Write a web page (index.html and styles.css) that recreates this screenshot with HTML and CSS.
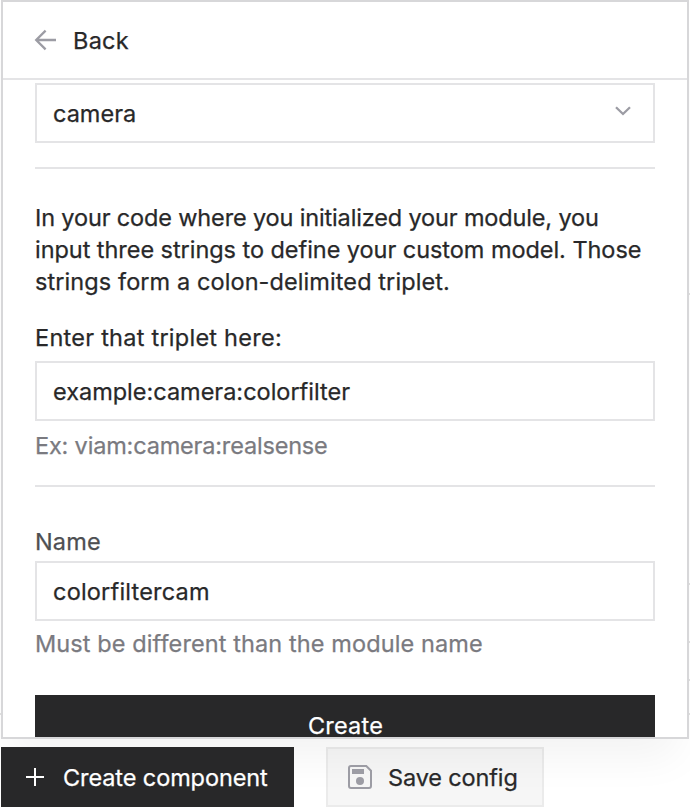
FILE: index.html
```html
<!DOCTYPE html>
<html lang="en">
<head>
<meta charset="utf-8">
<title>Create component</title>
<link rel="stylesheet" href="styles.css">
</head>
<body>
<div class="backdrop"></div>
<main class="panel">
  <header class="panel-header">
    <svg class="arrow" width="24" height="24" viewBox="0 0 24 24"><path d="M23 12H3.2M12.6 2.6 3.2 12l9.4 9.4"/></svg>
    <span class="back">Back</span>
  </header>
  <div class="panel-body">
    <div class="field select">
      <span class="camera">camera</span>
      <svg class="chevron" width="18" height="12" viewBox="0 0 18 12"><path d="m2 2.2 7 6.8 7-6.8"/></svg>
    </div>
    <hr class="rule">
    <p class="intro">
      <span class="line-one">In your code where you initialized your module, you</span>
      <span class="line-two">input three strings to define your custom model. Those</span>
      <span class="line-three">strings form a colon-delimited triplet.</span>
    </p>
    <div class="label enter">Enter that triplet here:</div>
    <div class="field"><span class="triplet">example:camera:colorfilter</span></div>
    <div class="hint example">Ex: viam:camera:realsense</div>
    <hr class="rule second">
    <div class="label name">Name</div>
    <div class="field"><span class="name-value">colorfiltercam</span></div>
    <div class="hint different">Must be different than the module name</div>
    <div class="submit">Create</div>
  </div>
</main>
<footer class="actions">
  <div class="button primary">
    <svg class="plus" width="20" height="20" viewBox="0 0 20 20"><path d="M10 1v18M1 10h18"/></svg>
    <span class="create-component">Create component</span>
  </div>
  <div class="button secondary">
    <svg class="save" width="24" height="24" viewBox="0 0 24 24"><path class="outline" d="M3 1h15.3L23 5.7V21a2 2 0 0 1-2 2H3a2 2 0 0 1-2-2V3a2 2 0 0 1 2-2Z"/><path d="M4 4h12v5H4z"/><circle cx="12" cy="16" r="4"/></svg>
    <span class="save-config">Save config</span>
  </div>
</footer>
</body>
</html>
```

FILE: styles.css
```css
* { box-sizing: border-box; }

body {
  margin: 0;
  height: 812px;
  overflow: hidden;
  background: #fff;
  color: #282829;
  font: 400 23.5px/32px Inter, "Liberation Sans", sans-serif;
  -webkit-text-stroke: .25px currentColor;
  white-space: nowrap;
}

svg { display: block; flex: none; fill: none; }

/* Table rules that continue behind the panel */
.backdrop {
  position: absolute;
  inset: 0 0 auto;
  height: 739px;
  z-index: -1;
  background:
    linear-gradient(#e0e0e0, #e0e0e0) 100% 293px / 2px 2px no-repeat,
    linear-gradient(#e0e0e0, #e0e0e0) 100% 583px / 2px 2px no-repeat,
    linear-gradient(#e0e0e0, #e0e0e0) 100% 641px / 2px 2px no-repeat,
    linear-gradient(#e0e0e0, #e0e0e0) 100% 679px / 2px 2px no-repeat,
    linear-gradient(#e0e0e0, #e0e0e0) 0 713px / 100% 2px no-repeat;
}

.panel {
  width: 688px;
  height: 739px;
  margin-left: 1px;
  border: 2px solid #d7d7d9;
  background: #fff;
  overflow: hidden;
  box-shadow: 0 30px 40px -12px rgb(0 0 0 / .05);
}

.panel-header {
  display: flex;
  align-items: center;
  gap: 15px;
  height: 78px;
  padding: 1px 30px 0;
  border-bottom: 2px solid #e4e4e6;
}

.arrow { stroke: #9c9ca4; stroke-width: 2.3; margin: -2px 1px 0 0; }
.back { letter-spacing: .25px; }

.panel-body { padding: 3px 32px 0; }

.field {
  display: flex;
  align-items: center;
  justify-content: space-between;
  height: 60px;
  padding: 2px 21px 0 16px;
  border: 2px solid #e4e4e6;
}

.select { padding-top: 1px; }
.chevron { stroke: #9c9ca4; stroke-width: 2.3; margin-top: -5px; }
.camera { letter-spacing: 0; }

.rule { height: 2px; margin: 24px 0 33px; border: 0; background: #e4e4e6; }
.second { margin: 23px 0 39px; }

.intro { margin: 0 0 24px; }
.intro span { display: block; }
.line-one { letter-spacing: -.15px; }
.line-two { letter-spacing: -.05px; }
.line-three { letter-spacing: .09px; }

.enter { height: 39px; letter-spacing: .25px; }
.triplet { letter-spacing: -.01px; }
.hint { color: #7a7a80; padding-top: 9px; height: 41px; }
.example { letter-spacing: -.18px; }
.name { color: #4e4f52; height: 35px; letter-spacing: .15px; }
.name-value { letter-spacing: .2px; }
.different { padding-top: 7px; letter-spacing: .1px; }

.submit {
  height: 60px;
  margin-top: 33px;
  padding: 15px 0 0 1px;
  background: #282829;
  color: #fff;
  text-align: center;
  letter-spacing: .2px;
}

.actions { display: flex; gap: 32px; padding: 8px 0 0 1px; }

.button { display: flex; align-items: center; height: 60px; }
.button span { padding-top: 2px; }

.primary {
  width: 293px;
  gap: 18px;
  padding-left: 24px;
  background: #282829;
  color: #fff;
}

.secondary {
  width: 218px;
  gap: 16px;
  padding-left: 20px;
  border: 2px solid rgb(0 0 0 / .08);
  background: rgb(0 0 0 / .035);
  background-clip: padding-box;
}

.plus { stroke: #fff; stroke-width: 2; }
.save { fill: #9c9ca4; }
.outline { fill: none; stroke: #9c9ca4; stroke-width: 2; }
.create-component { letter-spacing: -.1px; }
.save-config { letter-spacing: -.14px; }
```
